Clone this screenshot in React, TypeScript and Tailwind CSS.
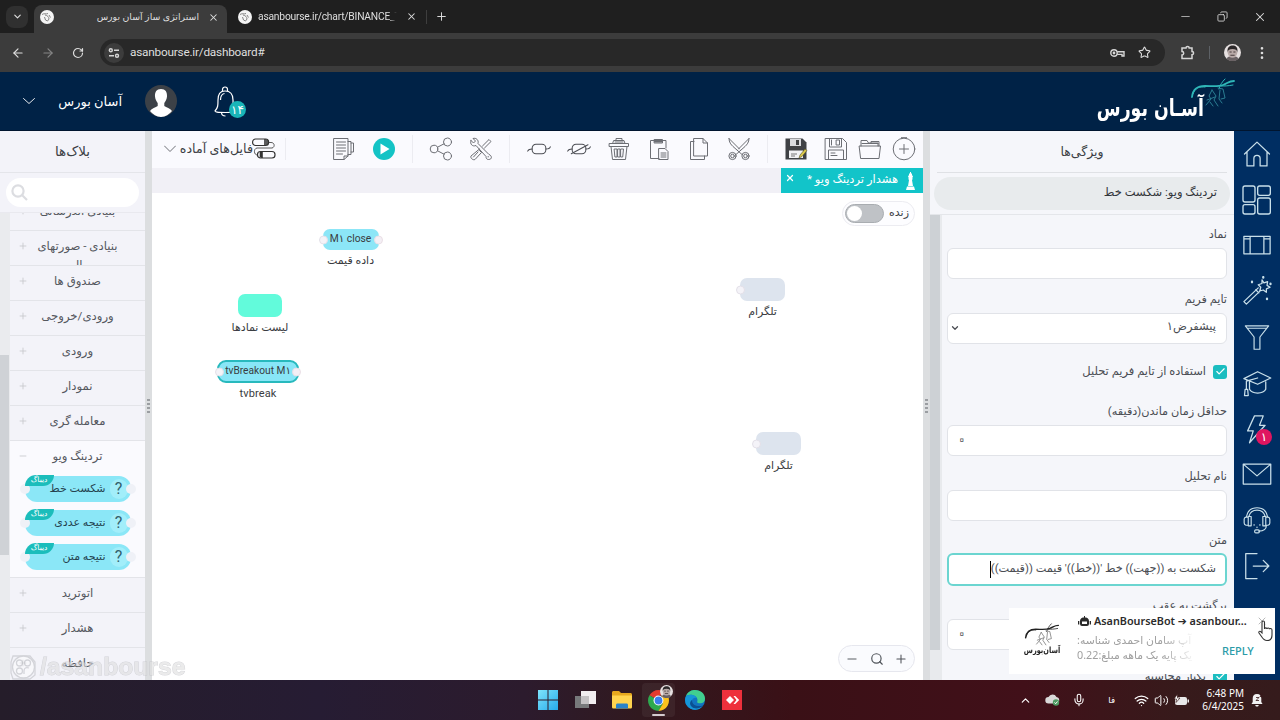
import React from 'react'
import clsx from 'clsx'
import {
  ArrowLeft,
  ArrowRight,
  Check,
  ChevronDown,
  ChevronUp,
  Copy,
  EllipsisVertical,
  Mic,
  Minus,
  Plus,
  RotateCw,
  Search,
  Star,
  Volume2,
  Wifi,
  X,
} from 'lucide-react'

const fa = "font-[Roboto,'DejaVu_Sans',sans-serif]"
const ui = "font-['Noto_Sans','DejaVu_Sans',sans-serif]"

type IconProps = { children: React.ReactNode; className?: string; size?: number; stroke?: number }

// Thin line icons on a 24 grid
const Line = ({ children, className, size = 24, stroke = 1 }: IconProps) => (
  <svg
    width={size}
    height={size}
    viewBox="0 0 24 24"
    fill="none"
    stroke="currentColor"
    strokeWidth={stroke}
    strokeLinecap="round"
    strokeLinejoin="round"
    className={clsx('shrink-0', className)}
  >
    {children}
  </svg>
)

const Favicon = () => (
  <svg width="14" height="14" viewBox="0 0 14 14" className="shrink-0">
    <circle cx="7" cy="7" r="7" fill="#f4f4f4" />
    <path d="M2 4.500C4 3 6 4.500 8 3.500M5 5c2.500.5 4 2 4 4l-1.500 2M4.500 7l1 3 2 1M9 5l1.500 2.500" stroke="#777" strokeWidth=".9" fill="none" />
  </svg>
)

const Face = ({ size = 16 }: { size?: number }) => (
  <svg width={size} height={size} viewBox="0 0 16 16" className="shrink-0">
    <circle cx="8" cy="8" r="8" fill="#e6e0e0" />
    <path d="M2.500 14c1-2.500 3-2.500 5.500-2.500s4.500 0 5.500 2.500A8 8 0 0 1 2.500 14z" fill="#6a6264" />
    <ellipse cx="8" cy="7.800" rx="4.600" ry="5.200" fill="#b9aaa8" />
    <path d="M3.400 7.500C2.800 3 5.500 1.500 8.200 1.500S13.200 3 12.600 7.500c-.7-2-1.500-2.800-4.600-2.800S4.100 5.500 3.400 7.500z" fill="#2c2829" />
    <path d="M5.200 7.500h2M8.800 7.500h2M6 10.500h4" stroke="#4a3f3f" strokeWidth="1" />
  </svg>
)

const Horse = ({ className, line = '#2fb7b8', dark = '#2a7d92' }: { className?: string; line?: string; dark?: string }) => (
  <svg viewBox="0 0 46 32" fill="none" strokeLinecap="round" className={className}>
    <path d="M2 19C3 10 8 8 15 8s13 1 18-1 6-4 11-4" stroke={line} strokeWidth="1.800" />
    <path d="M29 11c1-4 3-7 6-10M31 8c4 0 7 0 12-1M3 16c2-6 7-8 12-7" stroke={line} strokeWidth="1" />
    <path d="M22 12l-3 6 2 3-5 6M22 12l4 6-2 4 4 6M17 22l8-3M28 10l5 1 2 9-4 1M30 12l-1 9 3 4M20 24l3 4" stroke={dark} strokeWidth="1" />
  </svg>
)

const BrowserChrome = () => (
  <div className={clsx('bg-[#1f1f1f] text-[#dedede]', ui)}>
    <div className="flex h-[33px] items-stretch">
      <div className="flex w-[34px] items-center pl-[6px]">
        <div className="flex h-[22px] w-[22px] items-center justify-center rounded-lg bg-[#303030]">
          <ChevronDown size={11} strokeWidth={2.5} />
        </div>
      </div>
      <div className="mt-[5px] flex w-[193px] items-center rounded-t-lg bg-[#3c3c3c] pl-[6px] pr-[8px] pb-[4px]">
        <Favicon />
        <span dir="rtl" className="flex-1 pr-[9px] text-[9.4px] whitespace-nowrap">
          استراتژی ساز آسان بورس
        </span>
        <X size={11} strokeWidth={2.2} />
      </div>
      <div className="flex w-[195px] items-center pl-[11px]">
        <Favicon />
        <span className={clsx('ml-[6px] w-[139px] overflow-hidden text-[10.3px] tracking-[-0.22px] whitespace-nowrap [mask-image:linear-gradient(to_right,#000_94%,transparent)]', fa)}>
          asanbourse.ir/chart/BINANCE_T
        </span>
        <X size={11} strokeWidth={2.2} className="ml-[9px]" />
      </div>
      <div className="flex items-center gap-[8px] pl-[4px]">
        <div className="h-[14px] w-px bg-[#3e3e3e]" />
        <Plus size={13} strokeWidth={1.8} />
      </div>
      <div className="ml-auto flex items-center gap-[25px] pr-[13px]">
        <Minus size={13} strokeWidth={1.3} />
        <Copy size={11} strokeWidth={1.8} className="-scale-x-100" />
        <X size={14} strokeWidth={1.8} />
      </div>
    </div>
    <div className="flex h-[39px] items-center bg-[#3c3c3c] pr-[11px] pl-[11px]">
      <ArrowLeft size={14} strokeWidth={2} />
      <ArrowRight size={14} strokeWidth={2} className="ml-[16px] text-[#858585]" />
      <RotateCw size={12} strokeWidth={2.4} className="ml-[17px]" />
      <div className="ml-[16px] flex h-[27px] flex-1 items-center rounded-full bg-[#282828] pr-[14px] pl-[4px]">
        <div className="flex h-[20px] w-[20px] items-center justify-center rounded-full bg-[#3c3c3c]">
          <svg width="12" height="12" viewBox="0 0 12 12" fill="none" stroke="#d6d6d6" strokeWidth="1.400">
            <circle cx="2.800" cy="3.200" r="1.500" />
            <path d="M6 3.200h5M1 8.700h5" />
            <circle cx="9" cy="8.700" r="1.500" />
          </svg>
        </div>
        <span className={clsx('mt-px ml-[6px] text-[11.8px] tracking-[-0.22px]', fa)}>asanbourse.ir/dashboard#</span>
        <svg width="15" height="10" viewBox="0 0 15 10" fill="none" stroke="#d6d6d6" strokeWidth="1.400" className="ml-auto">
          <circle cx="4" cy="5" r="3.200" />
          <circle cx="4" cy="5" r=".7" fill="#d6d6d6" />
          <path d="M7.200 3.800H14v4.200h-2V6.400H7.200" />
        </svg>
        <Star size={13} strokeWidth={2} className="ml-[13px]" />
      </div>
      <svg width="15" height="15" viewBox="0 0 15 15" fill="none" stroke="#d6d6d6" strokeWidth="1.500" className="ml-[15px]">
        <path d="M2 3h4a1.600 1.600 0 0 1 3.200 0H12v3.500a1.600 1.600 0 0 1 0 3.200V13.500H2V10a1.700 1.700 0 0 0 0-3.400z" />
      </svg>
      <div className="mx-[14px] h-[13px] w-px bg-[#5d6166]" />
      <Face size={17} />
      <EllipsisVertical size={16} strokeWidth={2} className="ml-[13px] -mr-[1px]" />
    </div>
  </div>
)

const SiteHeader = () => (
  <header className="flex h-[59px] items-center border-b border-[#00152f] bg-[#002246] pr-[45px] pl-[23px] text-white">
    <Line size={12} stroke={1.8}><path d="M1 7l11 10L23 7" /></Line>
    <span dir="rtl" className={clsx('mt-[2px] ml-[22px] w-[65px] text-[13px] whitespace-nowrap', fa)}>آسان بورس</span>
    <svg width="32" height="32" viewBox="0 0 32 32" className="ml-[23px]">
      <circle cx="16" cy="16" r="16" fill="#3c4147" />
      <path d="M16 4c4.500 0 6.300 3 6 7.500-.2 3-1.600 5-2.700 6.500v3c2 1.500 6 2.200 7.700 5A16 16 0 0 1 16 32 16 16 0 0 1 5 26c1.700-2.800 5.700-3.500 7.700-5v-3C11.600 16.500 10.200 14.500 10 11.500 9.700 7 11.500 4 16 4z" fill="#fff" />
    </svg>
    <div className="relative ml-[34px] h-[32px] w-[34px]">
      <svg width="28" height="32" viewBox="0 0 28 32" fill="none" stroke="#fff" strokeWidth="1.200">
        <path d="M4 26c3-3 3-6 3-11 0-6 2-9 7-9s8 3 8 9c0 5 0 8 3 11 0 1-2 1.500-10.500 1.500S4 27 4 26zM11.500 6V4.500a2.500 2.500 0 0 1 5 0V6M10.500 27.500c0 2 1.500 3.500 4 3.500M9.500 15c0-4 1-6 4-6.500" />
      </svg>
      <span className={clsx('absolute top-[16px] left-[18px] flex h-[17px] w-[17px] items-center justify-center rounded-full bg-[#19b5b8] text-[12px]', fa)}>
        ۱۴
      </span>
    </div>
    <div className="relative ml-auto flex h-[46px] w-[139px] items-end">
      <span dir="rtl" className="w-[108px] origin-bottom scale-y-[1.35] text-[17.3px] leading-[24px] font-bold whitespace-nowrap font-['DejaVu_Sans',sans-serif]">
        آسـان بورس
      </span>
      <Horse className="absolute top-0 left-[94px] h-[32px] w-[46px]" />
    </div>
  </header>
)

const SearchIcon = () => (
  <svg width="17" height="17" viewBox="0 0 17 17" fill="none" stroke="#dcdde1" strokeWidth="2.200">
    <circle cx="7" cy="7" r="5.600" />
    <path d="M11 11l5 5" />
  </svg>
)

const Category = ({ label, open = false }: { label: string; open?: boolean }) => (
  <div className={clsx('flex h-[35px] shrink-0 items-start overflow-hidden', !open && 'border-b border-[#e3e4e9]')}>
    <span className="mt-[10px] ml-[8px] w-[12px] text-[#c6c8cd]">
      {open ? <Minus size={10} strokeWidth={2} /> : <Plus size={10} strokeWidth={2} />}
    </span>
    <p dir="rtl" className="mt-[6px] mr-[20px] flex-1 text-center text-[11.7px] leading-[19px] text-[#55585f]">{label}</p>
  </div>
)

const PaletteBlock = ({ label }: { label: string }) => (
  <div className="relative mx-auto flex h-[26px] w-[106px] items-center justify-end rounded-[12px] bg-[#8be7f7]">
    <span className="absolute -left-[5px] h-[10px] w-[10px] rounded-full bg-[#eff1f7]" />
    <span className="absolute -right-[5px] h-[10px] w-[10px] rounded-full bg-[#eff1f7]" />
    <span dir="rtl" className="absolute -top-px left-0 h-[11px] w-[29px] rounded-tl-[12px] rounded-br-[12px] bg-[#1bbdbb] text-center text-[7.5px] leading-[10px] text-white">
      دیباگ
    </span>
    <span dir="rtl" className="text-[11px] leading-[16px] font-medium whitespace-nowrap text-[#25434f]">{label}</span>
    <span className="mr-[3px] ml-[4px] flex h-[20px] w-[18px] items-center justify-center rounded-full bg-[#a2eefa] text-[16px] text-[#33606c]">?</span>
  </div>
)

const BlocksPanel = () => (
  <aside className={clsx('flex w-[145px] shrink-0 flex-col bg-[#f3f3f9]', fa)}>
    <h2 dir="rtl" className="h-[42px] border-b border-[#e4e5ea] text-center text-[13.5px] leading-[41px] text-[#3c3f45]">
      بلاک‌ها
    </h2>
    <div className="flex h-[40px] items-center border-b border-[#e9e9ef] pl-[6px]">
      <div className="flex h-[29px] w-[133px] items-center rounded-full bg-white pl-[5px]">
        <SearchIcon />
      </div>
    </div>
    <div className="flex min-h-0 flex-1">
      <div className="w-[10px] bg-[#eaebee] pt-[142px]">
        <div className="h-[200px] w-[9px] bg-[#cfd2d6]" />
      </div>
      <div className="flex flex-1 flex-col overflow-hidden">
        <div className="-mt-[17px] flex flex-col">
          <Category label="بنیادی اندرسانی" />
          <Category label="بنیادی - صورتهای مالی" />
          <Category label="صندوق ها" />
          <Category label="ورودی/خروجی" />
          <Category label="ورودی" />
          <Category label="نمودار" />
          <Category label="معامله گری" />
          <div className="flex h-[137px] shrink-0 flex-col border-b border-[#e3e4e9] bg-[#fafafe]">
            <Category label="تردینگ ویو" open />
            <div className="flex flex-col gap-[8px]">
              <PaletteBlock label="شکست خط" />
              <PaletteBlock label="نتیجه عددی" />
              <PaletteBlock label="نتیجه متن" />
            </div>
          </div>
          <Category label="اتوترید" />
          <Category label="هشدار" />
          <Category label="حافظه" />
        </div>
      </div>
    </div>
  </aside>
)

const Tool = ({ children, className = 'w-[40px]' }: { children: React.ReactNode; className?: string }) => (
  <button className={clsx('flex shrink-0 items-center justify-center', className)}>{children}</button>
)

const Sep = () => <div className="mx-[8px] h-[28px] w-px shrink-0 bg-[#ececf1]" />

const Toolbar = () => (
  <div className="flex h-[37px] items-center bg-[#fafafe] pb-px text-[#6c6e74]">
    <div className="flex w-[134px] shrink-0 items-center border-r border-[#ececf1] pl-[12px]">
      <Line size={12} stroke={2}><path d="M1 6l11 11L23 6" /></Line>
      <span dir="rtl" className={clsx('ml-[4px] w-[73px] text-[12.7px] whitespace-nowrap text-[#3c3f45]', fa)}>فایل‌های آماده</span>
      <svg width="24" height="22" viewBox="0 0 24 22" fill="none" stroke="#333" strokeWidth="1.200" className="-ml-px shrink-0">
        <rect x=".6" y="1" width="16" height="6.500" rx="3" />
        <rect x="5.500" y="13.500" width="17.500" height="6.500" rx="3" />
        <path d="M13 1v6.500M15 1.500v5.500M10 13.500V20M8.500 14v5.500" strokeWidth="1.600" />
        <path d="M16 4.500h3c4 0 4 5 1 5.500H5C1.500 10.500 1.500 17 5.500 17" strokeWidth=".8" />
      </svg>
    </div>
    <div className="w-[38px] shrink-0" />
    <Tool>
      <Line>
        <path d="M2 1.500h14V19l-4 3.500H2zM12 22.500V19h4M4.500 5h9M4.500 8h9M4.500 11h9M4.500 14h9M4.500 17h6M16 4.500h3v13h-3M19 6h2.500v9H19" />
      </Line>
    </Tool>
    <Tool>
      <svg width="22" height="22" viewBox="0 0 22 22">
        <circle cx="11" cy="11" r="11" fill="#14c3c5" />
        <path d="M7.500 5.500v11l9-5.500z" fill="#fff" />
      </svg>
    </Tool>
    <Sep />
    <Tool>
      <Line>
        <circle cx="5" cy="12" r="3.800" />
        <circle cx="18.500" cy="5" r="4" />
        <circle cx="18.500" cy="19" r="4" />
        <path d="M8.400 10.300l6.600-3.500M8.400 13.700l6.600 3.500" />
      </Line>
    </Tool>
    <Tool>
      <Line>
        <path d="M2 3.500 4.500 6l2-2L4 1.500c3-1 6 1.500 5 5l11 11c3 1 3.500 5-.5 5-2 0-2.500-1.500-2.500-3l-10-11C3.500 10 .5 7 2 3.500zM19 19.800h.5" />
        <path d="M13.500 9 20 2.500l2 2L15.500 11M10.500 13.500l2 2L6 22.500c-2 1-5-1.500-4-3.500l8.500-7M9 15l-4.500 5" />
      </Line>
    </Tool>
    <Sep />
    <div className="w-px shrink-0" />
    <Tool>
      <svg width="28" height="12" viewBox="0 0 28 14" fill="none" stroke="#4c4e54" strokeWidth="1.200" strokeLinecap="round">
        <rect x="6" y="1.500" width="16" height="11" rx="4.500" />
        <path d="M.8 9.500C2 7 3.500 7 6 7M22 7c3 0 4.500 0 5.200-2.500" />
      </svg>
    </Tool>
    <Tool>
      <svg width="28" height="12" viewBox="0 0 28 14" fill="none" stroke="#4c4e54" strokeWidth="1.200" strokeLinecap="round">
        <rect x="6" y="1.500" width="16" height="11" rx="4.500" />
        <path d="M.8 9.500C2 7 3.500 7 6 7M22 7c3 0 4.500 0 5.200-2.500M5 12.500 24.500 2" />
      </svg>
    </Tool>
    <Tool>
      <Line>
        <path d="M7 3.500h10l1 3H6zM9 3.500V1.500h6v2M2.500 6.500h19v3h-19zM4 9.500 5.500 22.500h13L20 9.500M7.500 12h2.500v8H8.300zM11 12h2v8h-2zM14 12h2.500l-.8 8H14zM8 5h8" />
      </Line>
    </Tool>
    <Tool>
      <Line>
        <path d="M8 3.500H3.500v18H12M16 3.500h3V11M7.500 2.500h8V6h-8zM12 11.500h6l3 3V22.500h-9zM14 16h5M14 18h5M14 20h5" />
        <path d="M8 3h7v2H8z" fill="currentColor" />
      </Line>
    </Tool>
    <Tool>
      <Line>
        <path d="M7 1.500h9l4.500 4.500v13H7zM16 1.500V6h4.500M7 4.500H3.500v18h14V19" />
      </Line>
    </Tool>
    <Tool>
      <Line>
        <path d="M2 1.500c0 4 2 6 4 8l9 8M22 1.500c0 4-2 6-4 8l-9 8M2 1.500 12.500 12M22 1.500 11.500 12" />
        <circle cx="5.500" cy="19" r="3.600" />
        <circle cx="18.500" cy="19" r="3.600" />
        <circle cx="5.500" cy="19" r="1.800" />
        <circle cx="18.500" cy="19" r="1.800" />
      </Line>
    </Tool>
    <Sep />
    <Tool>
      <svg width="24" height="24" viewBox="0 0 24 24">
        <path d="M1.500 1.500h17l4 4v17h-21z" fill="#3f4145" />
        <path d="M6 2h11v7H6z" fill="#d9dade" />
        <path d="M12 3h3v5h-3z" fill="#3f4145" />
        <path d="M5 13.500h14V21H5z" fill="#f2f2f5" />
        <path d="M7 17h6M7 19h4" stroke="#777" />
        <path d="m15 21 1-3 5-6 2 1.500-5 6z" fill="#dcc94a" stroke="#55502c" strokeWidth=".6" />
      </svg>
    </Tool>
    <Tool>
      <Line>
        <path d="M1.500 1.500h17l4 4v17h-21zM5.500 1.500V10h12V1.500M12.500 3h3v5h-3zM4.500 22.500V13h15v9.500M7 16h4M7 18.500h6M7.500 3v5" />
      </Line>
    </Tool>
    <Tool className="w-[28px]">
      <Line>
        <path d="M1.500 9h21l-1.500 12.500H3zM3 9V3.500h6L10.500 6H20v3M4 6.500h16M13 6V4.500h8V9" />
      </Line>
    </Tool>
    <Tool>
      <Line>
        <circle cx="12" cy="12" r="10.800" />
        <path d="M12 7.500v9M7.500 12h9M9.500 1.200V.3h5v.9" />
      </Line>
    </Tool>
  </div>
)

type NodeProps = { className: string; box: string; text?: string; caption: string; port?: 'left' | 'both' }

const FlowNode = ({ className, box, text, caption, port }: NodeProps) => (
  <div className={clsx('absolute flex flex-col items-center gap-[3px] text-[#3a3c41]', className)}>
    <div className={clsx('relative flex items-center justify-center pb-px whitespace-nowrap', box)}>
      {text}
      {port && <span className="absolute top-1/2 -left-[4px] h-[9px] w-[9px] -translate-y-1/2 rounded-full border border-[#e3e0e8] bg-[#f4f3f8]" />}
      {port === 'both' && <span className="absolute top-1/2 -right-[4px] h-[9px] w-[9px] -translate-y-1/2 rounded-full border border-[#eadfe6] bg-[#f4eff5]" />}
    </div>
    <span dir="auto" className="text-[11px] leading-[16px] tracking-[0.1px] whitespace-nowrap">{caption}</span>
  </div>
)

const Canvas = () => (
  <main className={clsx('flex w-[771px] shrink-0 flex-col bg-white', fa)}>
    <Toolbar />
    <div className="flex h-[25px] justify-end bg-[#f1f0f6]">
      <div dir="rtl" className="flex w-[142px] items-center bg-[#12c4c9] pr-[7px] pl-[8px] text-white">
        <svg width="11" height="18" viewBox="0 0 11 18" fill="#fff" className="shrink-0">
          <path d="M5 0h1v1.500h1V3L8 4.500 7 6.500h1L7 8l1 6H3l1-6-1-1.500h1L3 4.500 4 3V1.500h1zM2 14.500h7l1 3.500H1z" />
        </svg>
        <span className="mr-[7px] mb-px text-[11.5px] whitespace-nowrap">هشدار تردینگ ویو *</span>
        <X size={10} strokeWidth={3} className="mr-auto mb-[5px] -ml-[4px]" />
      </div>
    </div>
    <div className="relative flex-1 overflow-hidden">
      <div dir="rtl" className="absolute top-[8px] right-[8px] flex h-[25px] w-[73px] items-center justify-between rounded-full border border-[#ececf1] bg-[#fdfdff] pr-[5px] pl-[2px]">
        <span className="text-[11px] text-[#3c3f45]">زنده</span>
        <span className="flex h-[19px] w-[39px] items-center justify-end rounded-full border border-[#a9adb1] bg-[#bfc2c6]">
          <span className="ml-px h-[15px] w-[15px] rounded-full bg-white" />
        </span>
      </div>
      <FlowNode className="top-[36px] left-[170px] w-[57px]" box="h-[21px] w-[56px] rounded-[7px] bg-[#8ce6f7] text-[10.3px]" text="M۱ close" caption="داده قیمت" port="both" />
      <FlowNode className="top-[101px] left-[86px] w-[44px]" box="h-[23px] w-[44px] rounded-[7px] bg-[#62fbdb]" caption="لیست نمادها" />
      <FlowNode
        className="top-[167px] left-[65px] w-[82px]"
        box="h-[23px] w-[82px] rounded-[9px] border-2 border-[#28b9bd] bg-[#88e6f7] text-[10.2px]"
        text="tvBreakout M۱"
        caption="tvbreak"
        port="both"
      />
      <FlowNode className="top-[85px] left-[588px] w-[45px]" box="h-[23px] w-[45px] rounded-[7px] bg-[#dde4ee]" caption="تلگرام" port="left" />
      <FlowNode className="top-[239px] left-[604px] w-[45px]" box="h-[23px] w-[45px] rounded-[7px] bg-[#dde4ee]" caption="تلگرام" port="left" />
      <div className="absolute right-[8px] bottom-[8px] flex h-[27px] w-[77px] items-center justify-between rounded-full border border-[#e6e7ee] bg-[#fafbfe] px-[6px] text-[#4f5359]">
        <Minus size={14} strokeWidth={1.6} />
        <Search size={14} strokeWidth={2} />
        <Plus size={14} strokeWidth={1.8} />
      </div>
    </div>
  </main>
)

const Splitter = () => (
  <div className="flex w-[7px] shrink-0 flex-col items-center justify-center gap-[2px] bg-[#dcdee0]">
    {[0, 1, 2, 3].map((i) => (
      <span key={i} className="h-[2px] w-[3px] bg-[#9b9ea2]" />
    ))}
  </div>
)

const Field = ({ label, children }: { label: string; children?: React.ReactNode }) => (
  <div className="flex h-[64.500px] flex-col">
    <label className="h-[23px] text-[11.3px] leading-[20px]">{label}</label>
    <div className="flex h-[31px] items-center rounded-[6px] border border-[#e1e3e8] bg-white px-[10px] text-[11.5px]">{children}</div>
  </div>
)

const Checkbox = ({ label }: { label: string }) => (
  <div className="flex items-center gap-[7px] text-[11.5px]">
    <span className="flex h-[14px] w-[14px] items-center justify-center rounded-[3px] bg-[#1bbdc0] text-white">
      <Check size={11} strokeWidth={2.5} />
    </span>
    <span className="whitespace-nowrap">{label}</span>
  </div>
)

// Hollow stroke keeps the small zero readable as a ring
const Zero = () => (
  <span className="mt-[-3px] mr-auto text-[14px] leading-[20px] text-white [-webkit-text-stroke:1.6px_#55585e] [paint-order:stroke]">۰</span>
)

const PropertiesPanel = () => (
  <aside dir="rtl" className={clsx('flex w-[304px] shrink-0 flex-col bg-[#f5f6fa] text-[#4a4d53]', fa)}>
    <h2 className="mx-[7px] h-[42px] border-b border-[#dfe1e5] text-center text-[12.5px] leading-[41px] text-[#3c3f45]">ویژگی‌ها</h2>
    <div className="flex h-[42px] items-center border-b border-[#e4e6ea] px-[4px]">
      <div className="h-[33px] w-full rounded-full bg-[#e8ebed] px-[13px] text-[11.5px] leading-[31px] text-[#33363b]">تردینگ ویو: شکست خط</div>
    </div>
    <div className="flex min-h-0 flex-1">
      <div className="flex-1 overflow-hidden pt-[10px] pr-[7px] pl-[5px]">
        <Field label="نماد" />
        <Field label="تایم فریم">
          <span className="mt-[-3px]">پیشفرض۱</span>
          <ChevronDown size={10} strokeWidth={3} className="mr-auto -ml-[8px]" />
        </Field>
        <div className="h-[48px] pt-[9px]">
          <Checkbox label="استفاده از تایم فریم تحلیل" />
        </div>
        <Field label="حداقل زمان ماندن(دقیقه)">
          <Zero />
        </Field>
        <Field label="نام تحلیل" />
        <div className="flex h-[64.500px] flex-col">
          <label className="h-[22px] text-[11.300px] leading-[20px]">متن</label>
          <div className="flex h-[33px] items-center rounded-[6px] border-2 border-[#6bd5d0] bg-white px-[9px] pb-px text-[11.3px] whitespace-nowrap">
            شکست به ((جهت)) خط '((خط))' قیمت ((قیمت))
            <span className="h-[17px] w-px bg-black" />
          </div>
        </div>
        <Field label="برگشت به عقب">
          <Zero />
        </Field>
        <div className="pt-[8px]">
          <Checkbox label="یکبار محاسبه" />
        </div>
      </div>
      <div className="w-[12px] bg-[#e8eaed] pr-[2px]">
        <div className="h-[435px] w-[10px] bg-[#cdd1d5]" />
      </div>
    </div>
  </aside>
)

const NavItem = ({ children }: { children: React.ReactNode }) => (
  <div className="relative flex h-[45.8px] items-center justify-center">{children}</div>
)

const SideNav = () => (
  <nav className={clsx('flex flex-1 flex-col bg-[#002e62] text-[#c9e0ea]', fa)}>
    <NavItem><Line size={30}><path d="M2 12 12 2.500 22 12M4 10.500V21.500h5.500v-6a2.500 2.500 0 0 1 5 0v6H20V10.500" /></Line></NavItem>
    <NavItem>
      <Line size={32}>
        <rect x="1.500" y="1.500" width="9" height="12" rx="1.500" />
        <rect x="12.500" y="1.500" width="9.500" height="7" rx="1.500" />
        <rect x="1.500" y="15.500" width="9" height="7" rx="1.500" />
        <rect x="12.500" y="10.500" width="9.500" height="12" rx="1.500" />
      </Line>
    </NavItem>
    <NavItem><Line size={30}><path d="M1.500 5h21v14h-21zM6.500 5v14M17.500 5v14M1.500 7h5M17.500 7h5" /></Line></NavItem>
    <NavItem>
      <Line size={30}>
        <path d="M13 9.500 1.500 20.500l2 2L15 11.500M11 11l2.500 2.500M16 3l1.500 2.500 3-1-.5 3 2.500 1.500-3 1.300V13l-2.500-1.800-2.800.8.8-3L13 7l3-1z" />
        <path d="M8 4.500v.5M20 18v.5M22.800 6v.5M17 .8v.5" stroke="currentColor" strokeWidth="1.800" />
      </Line>
    </NavItem>
    <NavItem><Line size={28}><path d="M2 2.500h20L14.500 12v10.500h-5V12zM4 4.500h16" /></Line></NavItem>
    <NavItem>
      <Line size={30}>
        <path d="M1.500 8.500 12.500 3l10.500 5-10.500 5zM6 11v6c2 4 11 4 13 0v-6M12.500 8 3.500 10.500V17M2.500 17h2l.5 5h-3z" />
      </Line>
    </NavItem>
    <NavItem>
      <Line size={30}><path d="M10 1.500h7L14 9h4.500L6 23l3-9.500H4.500z" /></Line>
      <span className="absolute top-[23px] left-[22px] flex h-[16px] w-[16px] items-center justify-center rounded-full bg-[#df1560] text-[12px] text-white">۱</span>
    </NavItem>
    <NavItem><Line size={30}><path d="M1 4h22v16H1zM1.500 4.500 12 13.500l10.500-9" /></Line></NavItem>
    <NavItem>
      <Line size={28}>
        <path d="M3 9C4 4 7 1.500 12 1.500S20 4 21 9M5 9c1-4 3-5.500 7-5.500S18 5 19 9M2.500 9.500h2v7h-2a2 2 0 0 1-1.500-2v-3a2 2 0 0 1 1.500-2zM4.500 9H7v8H4.500zM17 9h2.500v8H17zM19.500 9.500h2a2 2 0 0 1 1.500 2v3a2 2 0 0 1-1.500 2h-2zM20 17c0 3-3 4.500-6.500 4.500M9.500 16v.5M12 18v.5M14.500 16v.5" />
        <rect x="10" y="20.500" width="4" height="2.500" rx="1" />
      </Line>
    </NavItem>
    <NavItem><Line size={30}><path d="M12 2H3v20h9M9 12h12M17 7.500l4.500 4.500-4.500 4.500" /></Line></NavItem>
  </nav>
)

const Notification = () => (
  <div className={clsx('absolute top-[608px] left-[1009px] flex h-[66px] w-[266px] bg-white', ui)}>
    <div className="flex w-[66px] flex-col items-center pt-[15px]">
      <Horse className="h-[25px] w-[38px]" line="#222" dark="#777" />
      <span dir="rtl" className="-mt-[4px] scale-y-[1.3] text-[6.6px] leading-[12px] font-bold text-[#222] font-['DejaVu_Sans',sans-serif]">آسان‌بورس</span>
    </div>
    <div className="flex flex-1 flex-col pt-[5px]">
      <div className="flex h-[16px] items-center pl-[3px] text-[10.8px] font-semibold whitespace-nowrap text-[#2b2b2b]">
        <svg width="13" height="11" viewBox="0 0 13 11" className="mr-[3px]">
          <path d="M6 0h1v1.500h-1zM2 8V5a4.500 3.800 0 0 1 9 0v3a2 2 0 0 1-2 2H4a2 2 0 0 1-2-2zM0 5h1.300v3.500H0zM11.700 5H13v3.500h-1.300z" fill="#2b2b2b" />
          <path d="M4 5.500h5V8H4z" fill="#fff" />
        </svg>
        AsanBourseBot ➔ asanbour...
      </div>
      <div className="flex">
        <div dir="rtl" className="mt-[3px] ml-[2px] w-[120px] overflow-hidden text-[10.8px] leading-[15px] whitespace-nowrap text-[#a0a0a0] [mask-image:linear-gradient(to_right,#000_70%,transparent)]">
          <p className="text-left">آپ سامان احمدی شناسه:</p>
          <p className="text-left">یک پایه یک ماهه مبلغ:0.22</p>
        </div>
        <span className="mt-[14px] ml-[25px] text-[11px] font-medium text-[#2a9ba8]">REPLY</span>
      </div>
    </div>
    <X size={12} strokeWidth={1.4} className="absolute top-[7px] left-[247px] text-[#999]" />
  </div>
)

const Cursor = () => (
  <svg width="17" height="22" viewBox="0 0 17 22" className="absolute top-[620px] left-[1258px]" fill="#fff" stroke="#333" strokeWidth="1.100">
    <path d="M4 13V2.500C4 .5 6.500.5 6.500 2.500V9c0-1.500 2.500-1.500 2.500 0 0-1.300 2.500-1.300 2.500.3 0-1.200 2.500-1 2.500.7v5c0 3-1.500 5.500-5 5.500-3 0-4-1.500-5.500-4L1 13c-.8-1.500 1-2.500 2-1z" />
  </svg>
)

const Watermark = () => (
  <div className="absolute top-[653px] left-[10px] flex items-center gap-[3px] opacity-60">
    <svg width="27" height="28" viewBox="0 0 27 28" fill="none" stroke="#bfc0c5" strokeWidth="1.300">
      <path d="M3 3h17l5 6v13l-5 4H3l-2-6V9z" />
      <circle cx="13.500" cy="14" r="11" fill="#fff" fillOpacity=".7" />
      <circle cx="9.500" cy="10" r="3" />
      <circle cx="17.500" cy="10" r="3" />
      <circle cx="9.500" cy="18" r="3" />
      <path d="M14 21v-3c0-3 2-4 5-3" />
    </svg>
    <span className="text-[24.7px] leading-[28px] font-bold text-[#dededf] [-webkit-text-stroke:1px_#bdbec3] [paint-order:stroke] font-['Liberation_Sans',sans-serif]">
      /asanbourse
    </span>
  </div>
)

const Taskbar = () => (
  <footer className={clsx('flex h-[40px] items-center bg-[linear-gradient(to_right,#251d2a_0%,#261c33_25%,#2c1b2d_41%,#31191f_50%,#3a1016_62%,#411019_80%,#371a1b_92%,#351b1c_100%)] text-white', ui)}>
    <div className="ml-[538px] flex shrink-0 items-center gap-[17px]">
      <svg width="20" height="20" viewBox="0 0 20 20">
        <defs>
          <linearGradient id="win" x1="0" y1="0" x2="1" y2="1">
            <stop stopColor="#7fe3fb" />
            <stop offset="1" stopColor="#25abec" />
          </linearGradient>
        </defs>
        <path d="M0 0h9.500v9.500H0zM10.500 0H20v9.500h-9.500zM0 10.500h9.500V20H0zM10.500 10.500H20V20h-9.500z" fill="url(#win)" />
      </svg>
      <svg width="21" height="20" viewBox="0 0 21 20">
        <path d="M0 6h14v12H0z" fill="#77797b" />
        <path d="M6 1h15v13H6z" fill="#f1eef0" />
        <path d="M6 6h8v8H6z" fill="#c4c2c4" />
      </svg>
      <svg width="20" height="18" viewBox="0 0 20 18" className="-ml-px">
        <path d="M0 1.500C0 .7.700 0 1.500 0H7l2 2h9.500c.8 0 1.500.7 1.500 1.500V16H0z" fill="#e6a81e" />
        <path d="M0 4.500h20V16c0 1-.7 1.500-1.500 1.500h-17C.7 17.500 0 17 0 16z" fill="#ffd44f" />
        <path d="M4 17.500V14c0-.8.500-1.500 1.500-1.500h9c1 0 1.500.7 1.500 1.500v3.500z" fill="#2a83c9" />
      </svg>
      <div className="relative -mx-[7px] flex h-[34px] w-[33px] items-center justify-center rounded bg-white/5">
        <svg width="21" height="21" viewBox="0 0 20 20">
          <path d="M10 10 1.340 5A10 10 0 0 1 18.660 5H10z" fill="#e33b2e" />
          <path d="M1.340 5A10 10 0 0 0 10 20l4.330-7.500L10 10z" fill="#2da94f" />
          <path d="M18.660 5A10 10 0 0 1 10 20l4.330-7.500L13 5z" fill="#fcc31e" />
          <circle cx="10" cy="10" r="4.700" fill="#fff" />
          <circle cx="10" cy="10" r="3.700" fill="#3b7ded" />
        </svg>
        <span className="absolute top-[2px] left-[18px]"><Face size={13} /></span>
        <span className="absolute bottom-[1px] h-[2px] w-[13px] rounded-full bg-[#d4cccf]" />
      </div>
      <svg width="20" height="20" viewBox="0 0 20 20">
        <circle cx="10" cy="10" r="10" fill="#1173c0" />
        <path d="M1 6C3 1 7 0 10 0c6 0 10 4 10 8.500S16 14 13 13c-1.500-.6-.5-1.500-.5-3C12.500 6 6 3 1 6z" fill="#41cf8f" />
        <path d="M.5 7C3 3.500 10 4 12 8c-3-1-6 1-5 5s6 5 10 3.500C14 21 5 21 1.500 15A10 10 0 0 1 .5 7z" fill="#1596d8" />
        <path d="M7 10c0 6 6 7 11 5.500-3 3-8 4-11 1.500s-2-6 0-7z" fill="#0b4f92" />
      </svg>
      <svg width="20" height="20" viewBox="0 0 20 20">
        <path d="M0 0h20v20H0z" fill="#ee303c" />
        <path d="m8 6 4 4-4 4-4-4zM11.500 6h1.700l4 4-4 4h-1.700l3-4z" fill="#fff" />
      </svg>
    </div>
    <div className="ml-auto flex items-center pr-[17px]">
      <ChevronUp size={13} strokeWidth={2.2} />
      <svg width="15" height="12" viewBox="0 0 15 12" className="ml-[13px]">
        <path d="M3.500 9.500a3.200 3.200 0 0 1 0-6.400A4.500 4.500 0 0 1 11.500 3a3.300 3.300 0 0 1 0 6.500z" fill="#d9d9d9" />
        <circle cx="11" cy="8.500" r="3.200" fill="#4f9c63" />
        <path d="m9.500 8.500 1.200 1.200 1.800-2.200" stroke="#fff" fill="none" />
      </svg>
      <Mic size={14} strokeWidth={1.8} className="ml-[12px]" />
      <span dir="rtl" className="ml-[20px] w-[9px] text-[8.5px]">فا</span>
      <Wifi size={15} strokeWidth={2} className="ml-[19px]" />
      <Volume2 size={15} strokeWidth={1.6} className="ml-[5px]" />
      <svg width="15" height="12" viewBox="0 0 15 12" className="ml-[5px]">
        <rect x="1" y="3" width="12" height="8" rx="2" fill="#e9e9e9" />
        <path d="M13.500 5.500H15v3h-1.500z" fill="#e9e9e9" />
        <path d="M3.500 0 0 5h2.500L2 8.500 6 4H3.500z" fill="#fff" stroke="#381819" strokeWidth=".7" />
      </svg>
      <div className="ml-[12px] w-[43px] text-right text-[10px] leading-[13px] whitespace-nowrap">
        <p>6:48 PM</p>
        <p>6/4/2025</p>
      </div>
      <svg width="12" height="14" viewBox="0 0 12 14" className="ml-[7px]">
        <path d="M6 1c3 0 4.300 2 4.300 4.500V9l1.200 2H.5l1.200-2V5.500C1.700 3 3 1 6 1zM4.300 12h3.400c0 2-3.400 2-3.400 0z" fill="#f2f2f2" />
        <path d="M5 4.500h3L5 7.500h3M9 1h2.500L9 3.500h2.500" stroke="#381819" strokeWidth=".8" fill="none" />
      </svg>
    </div>
  </footer>
)

const App = () => {
  return (
    <div className="relative flex h-[720px] w-[1280px] flex-col overflow-hidden">
      <BrowserChrome />
      <SiteHeader />
      <div className="flex h-[549px]">
        <BlocksPanel />
        <Splitter />
        <Canvas />
        <Splitter />
        <PropertiesPanel />
        <SideNav />
      </div>
      <Taskbar />
      <Watermark />
      <Notification />
      <Cursor />
    </div>
  )
}

export default App
